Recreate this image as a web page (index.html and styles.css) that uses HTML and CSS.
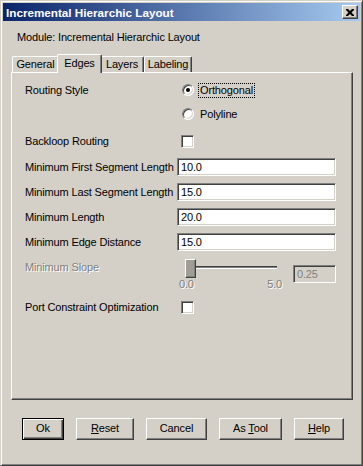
FILE: index.html
```html
<!DOCTYPE html>
<html lang="en">
<head>
    <meta charset="UTF-8">
    <title>Incremental Hierarchic Layout</title>
    <link rel="stylesheet" href="styles.css">
</head>
<body>
    <div class="window">
        <div class="titlebar">
            <span class="title">Incremental Hierarchic Layout</span>
            <span class="close">
                <svg width="8" height="7" viewBox="0 0 8 7"><path d="M0 0h2l2 2 2-2h2v1l-2.5 2.5L8 6v1H6L4 5 2 7H0V6l2.5-2.5L0 1z" fill="#000"/></svg>
            </span>
        </div>
        <div class="content">
            <div class="module">Module: Incremental Hierarchic Layout</div>
            <div class="tabs">
                <div class="tab tab-general">General</div>
                <div class="tab tab-edges selected">Edges</div>
                <div class="tab tab-layers">Layers</div>
                <div class="tab tab-labeling">Labeling</div>
            </div>
            <div class="panel">
                <div class="row row-routing">
                    <div class="label top">Routing Style</div>
                    <div class="radios">
                        <div class="radio-line"><span class="radio checked"></span><span class="focus">Orthogonal</span></div>
                        <div class="radio-line"><span class="radio"></span><span class="radio-text">Polyline</span></div>
                    </div>
                </div>
                <div class="row row-check">
                    <div class="label">Backloop Routing</div>
                    <div><span class="checkbox"></span></div>
                </div>
                <div class="row row-field first">
                    <div class="label">Minimum First Segment Length</div>
                    <div class="field">10.0</div>
                </div>
                <div class="row row-field">
                    <div class="label">Minimum Last Segment Length</div>
                    <div class="field">15.0</div>
                </div>
                <div class="row row-field">
                    <div class="label">Minimum Length</div>
                    <div class="field">20.0</div>
                </div>
                <div class="row row-field">
                    <div class="label">Minimum Edge Distance</div>
                    <div class="field">15.0</div>
                </div>
                <div class="row row-slope">
                    <div class="label disabled">Minimum Slope</div>
                    <div class="slope">
                        <div class="slider">
                            <div class="track"></div>
                            <div class="thumb"></div>
                            <div class="ticks"><span class="disabled">0.0</span><span class="disabled">5.0</span></div>
                        </div>
                        <div class="field small off">0.25</div>
                    </div>
                </div>
                <div class="row row-port">
                    <div class="label">Port Constraint Optimization</div>
                    <div><span class="checkbox"></span></div>
                </div>
            </div>
            <div class="buttons">
                <div class="btn btn-ok default">Ok</div>
                <div class="btn btn-reset"><u>R</u>eset</div>
                <div class="btn btn-cancel">Cancel</div>
                <div class="btn btn-tool">As <u>T</u>ool</div>
                <div class="btn btn-help"><u>H</u>elp</div>
            </div>
        </div>
    </div>
</body>
</html>
```

FILE: styles.css
```css
*{margin:0;padding:0;box-sizing:border-box;}
body{
    background-color:#d4d0c8;
    font-family:"Liberation Sans",Arial,sans-serif;
    font-size:11px;
    letter-spacing:-0.15px;
    color:#000;
    white-space:nowrap;
}
.window{
    width:363px;
    height:466px;
    padding:2px;
    background-color:#d4d0c8;
    border:1px solid;
    border-color:#d4d0c8 #404040 #404040 #d4d0c8;
    box-shadow:inset 1px 1px #fff, inset -1px -1px #808080;
}
.titlebar{
    display:flex;
    align-items:center;
    justify-content:space-between;
    height:18px;
    padding:0 2px 0 3px;
    background:linear-gradient(to right,#0a246a,#a6caf0);
}
.title{
    color:#fff;
    font-weight:bold;
    font-size:11.7px;
    letter-spacing:0;
}
.close{
    display:flex;
    align-items:center;
    justify-content:center;
    width:16px;
    height:14px;
    background-color:#d4d0c8;
    border:1px solid;
    border-color:#fff #404040 #404040 #fff;
    box-shadow:inset -1px -1px #808080;
}
.content{
    padding:0 7px 0 8px;
}
.module{
    margin-top:9px;
    padding-left:6px;
    line-height:14px;
}
/* tabs */
.tabs{
    display:flex;
    align-items:flex-end;
    margin-top:10px;
    padding-left:1px;
    height:18px;
    position:relative;
    z-index:1;
}
.tab{
    height:16px;
    line-height:14px;
    text-align:center;
    border-top:1px solid #fff;
    border-left:1px solid #fff;
    border-right:1px solid #404040;
    border-top-left-radius:2px;
    border-top-right-radius:2px;
    box-shadow:inset -1px 0 #808080;
}
.tab-general{width:47px;}
.tab-edges{width:41px;}
.tab-layers{width:44px;}
.tab-labeling{width:48px;}
.tab.selected{
    height:19px;
    margin:0 -2px -1px;
    padding-top:1px;
    width:45px;
    background-color:#d4d0c8;
    position:relative;
    z-index:2;
}
/* panel */
.panel{
    height:328px;
    padding:5px 0 0 13px;
    border:1px solid;
    border-color:#fff #404040 #404040 #fff;
    box-shadow:inset -1px -1px #808080;
}
.row{
    display:grid;
    grid-template-columns:152px auto;
    align-items:center;
}
.label.top{
    align-self:start;
    line-height:24px;
}
.disabled{
    color:#808080;
    text-shadow:1px 1px #fff;
}
.row-routing{height:48px;}
.radio-line{
    display:flex;
    align-items:center;
    height:24px;
    padding-left:5px;
}
.radio{
    position:relative;
    width:12px;
    height:12px;
    border-radius:50%;
    background-color:#fff;
    border:1px solid;
    border-color:#808080 #fff #fff #808080;
    box-shadow:inset 1px 1px #404040, inset -1px -1px #d4d0c8;
}
.radio.checked::after{
    content:"";
    position:absolute;
    left:3px;
    top:3px;
    width:4px;
    height:4px;
    border-radius:50%;
    background-color:#000;
}
.focus{
    margin-left:4px;
    padding:0 1px;
    line-height:13px;
    border:1px dotted #000;
}
.radio-text{
    margin-left:6px;
}
.row-check{
    margin-top:3px;
    height:24px;
}
.checkbox{
    display:block;
    width:13px;
    height:13px;
    margin-left:4px;
    background-color:#fff;
    border:1px solid;
    border-color:#808080 #fff #fff #808080;
    box-shadow:inset 1px 1px #404040, inset -1px -1px #d4d0c8;
}
.row-field{
    height:18px;
    margin-top:7px;
}
.row-field.first{margin-top:5px;}
.field{
    width:159px;
    height:18px;
    padding-left:3px;
    line-height:16px;
    background-color:#fff;
    border:1px solid;
    border-color:#808080 #fff #fff #808080;
    box-shadow:inset 1px 1px #404040, inset -1px -1px #d4d0c8;
}
.field.small{width:43px;}
.field.off{
    background-color:#d4d0c8;
    color:#808080;
}
.row-slope{
    height:34px;
    margin-top:7px;
    align-items:start;
}
.row-slope .label{line-height:18px;}
.slope{
    display:flex;
    align-items:flex-start;
}
.slider{
    position:relative;
    width:116px;
    height:34px;
}
.track{
    position:absolute;
    left:8px;
    top:9px;
    width:92px;
    height:2px;
    border-top:1px solid #808080;
    border-bottom:1px solid #fff;
    box-shadow:0 -1px #404040;
}
.thumb{
    position:absolute;
    left:8px;
    top:1px;
    width:11px;
    height:19px;
    background-color:#a09c96;
    border:1px solid;
    border-color:#fff #404040 #404040 #fff;
    box-shadow:inset -1px -1px #808080;
}
.ticks{
    position:absolute;
    left:2px;
    top:20px;
    width:103px;
    display:flex;
    justify-content:space-between;
    line-height:13px;
}
.slope .field{margin-top:7px;}
.row-port{
    height:14px;
    margin-top:8px;
}
/* buttons */
.buttons{
    display:flex;
    gap:12px;
    margin-top:18px;
    padding-left:11px;
}
.btn{
    height:22px;
    line-height:18px;
    text-align:center;
    border:1px solid;
    border-color:#fff #404040 #404040 #fff;
    box-shadow:inset -1px -1px #808080;
}
.btn.default{
    border:1px solid #000;
    box-shadow:inset 1px 1px #fff, inset -1px -1px #404040, inset -2px -2px #808080;
}
.btn-ok{width:42px;}
.btn-reset{width:58px;}
.btn-cancel{width:61px;}
.btn-tool{width:63px;}
.btn-help{width:50px;}
```
